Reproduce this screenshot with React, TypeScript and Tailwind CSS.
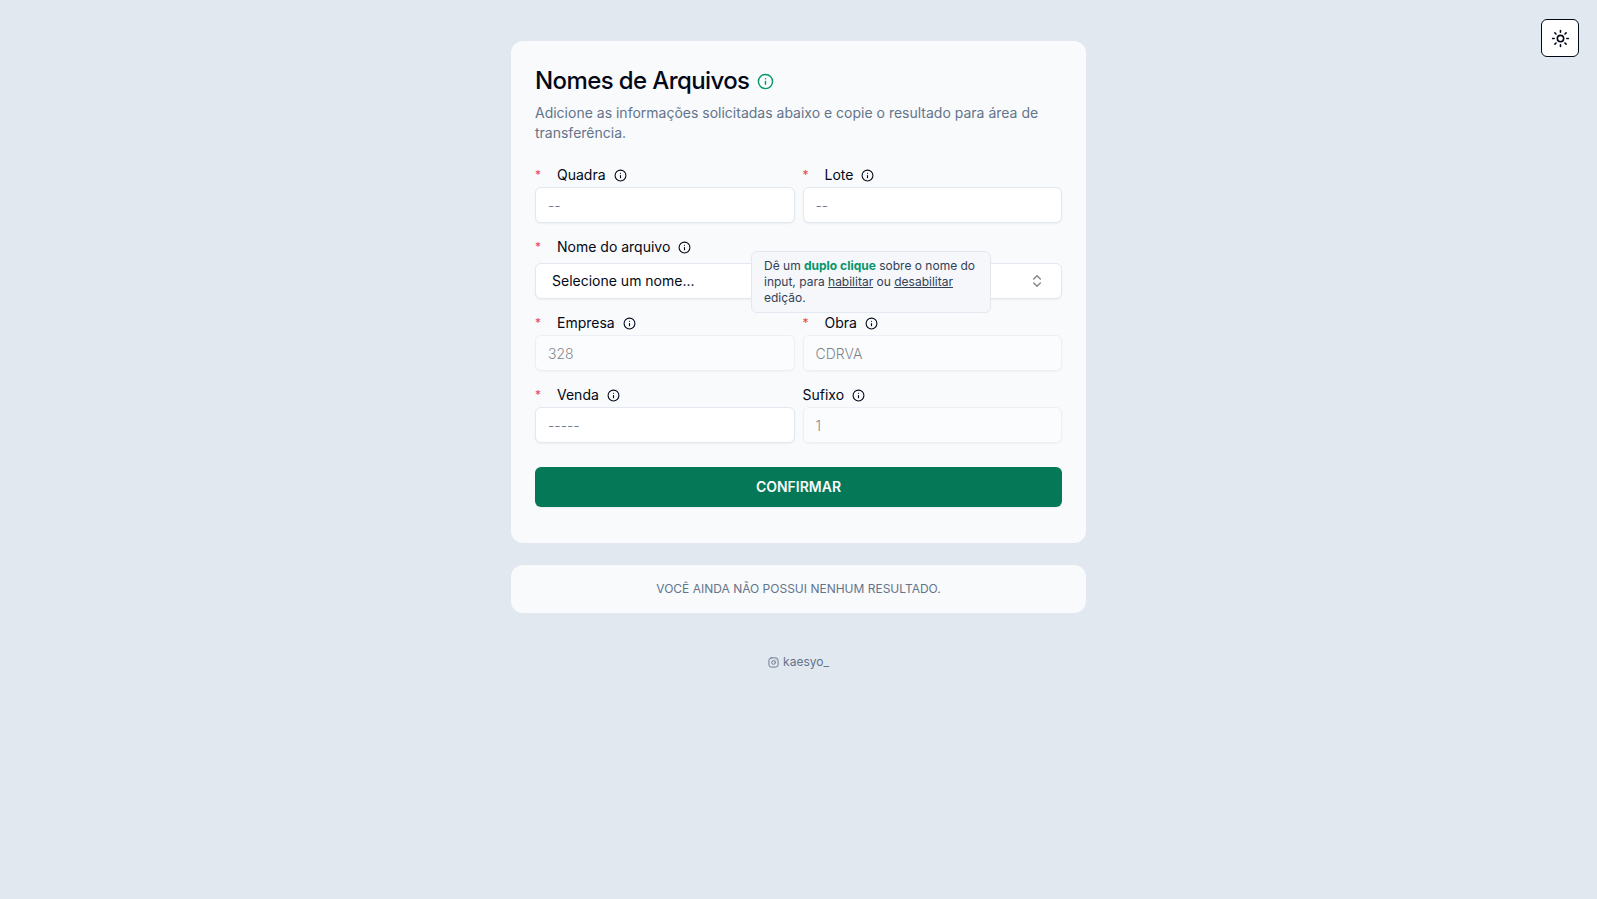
import { useState } from 'react';
import type { ReactNode } from 'react';
import { ChevronsUpDown, Info, Instagram, Sun } from 'lucide-react';

type FieldProps = {
  id: string;
  label: string;
  required?: boolean;
  children: ReactNode;
};

function Field({ id, label, required = false, children }: FieldProps) {
  return (
    <div className="flex flex-col gap-0.5">
      <div className="flex h-5 items-center text-sm">
        {required && <span className="w-[22px] text-xs leading-5 text-[#ef4444]">*</span>}
        <label htmlFor={id}>{label}</label>
        <Info className="ml-2 size-[13px]" aria-hidden="true" />
      </div>
      {children}
    </div>
  );
}

const inputClass =
  'h-9 w-full rounded-md border border-[#e2e8f0] bg-white px-3 text-sm font-light shadow-xs outline-none placeholder:text-[#64748b] focus-visible:border-slate-400 disabled:opacity-50';

export default function App() {
  const [values, setValues] = useState({ quadra: '', lote: '', venda: '' });
  const update = (key: keyof typeof values) => (e: { target: { value: string } }) =>
    setValues({ ...values, [key]: e.target.value });

  return (
    <div className="min-h-screen bg-[#e2e8f0] font-[Inter,sans-serif] text-[#020817] antialiased">
      <button
        type="button"
        aria-label="Alternar tema"
        className="absolute top-[19px] right-[18px] flex size-[38px] items-center justify-center rounded-md border border-[#020817] bg-white"
      >
        <Sun className="size-[19px]" />
      </button>

      <main className="mx-auto flex w-full max-w-[575px] flex-col pt-[41px]">
        <section className="rounded-xl bg-[#f8fafc] px-6 pt-6 pb-9">
          <header>
            <div className="flex items-center gap-2">
              <h1 className="text-2xl font-medium tracking-tight">Nomes de Arquivos</h1>
              <Info className="size-[17px] text-[#059669]" aria-hidden="true" />
            </div>
            <p className="mt-1.5 text-sm text-[#64748b]">
              Adicione as informações solicitadas abaixo e copie o resultado para área de transferência.
            </p>
          </header>

          <form className="mt-[22px] flex flex-col" onSubmit={(e) => e.preventDefault()}>
            <div className="flex flex-col gap-3.5">
              <div className="grid grid-cols-2 gap-2">
                <Field id="quadra" label="Quadra" required>
                  <input id="quadra" placeholder="--" className={inputClass} value={values.quadra} onChange={update('quadra')} />
                </Field>
                <Field id="lote" label="Lote" required>
                  <input id="lote" placeholder="--" className={inputClass} value={values.lote} onChange={update('lote')} />
                </Field>
              </div>

              <div className="relative">
                <Field id="nome" label="Nome do arquivo" required>
                  <button
                    id="nome"
                    type="button"
                    role="combobox"
                    aria-expanded="false"
                    aria-controls="nome-lista"
                    className="mt-1 flex h-9 w-full items-center justify-between rounded-md border border-[#e2e8f0] bg-white px-4 text-sm shadow-xs"
                  >
                    Selecione um nome...
                    <ChevronsUpDown className="size-4 opacity-50" />
                  </button>
                </Field>
                <div
                  role="tooltip"
                  className="absolute top-3.5 left-[216px] w-60 rounded-md border border-[#e2e8f0] bg-[#f5f7fb] px-3 py-1.5 text-xs text-[#334155]"
                >
                  Dê um <strong className="font-bold text-[#059669]">duplo clique</strong> sobre o nome do input, para{' '}
                  <span className="underline">habilitar</span> ou <span className="underline">desabilitar</span> edição.
                </div>
              </div>

              <div className="grid grid-cols-2 gap-2">
                <Field id="empresa" label="Empresa" required>
                  <input id="empresa" defaultValue="328" disabled className={inputClass} />
                </Field>
                <Field id="obra" label="Obra" required>
                  <input id="obra" defaultValue="CDRVA" disabled className={inputClass} />
                </Field>
              </div>

              <div className="grid grid-cols-2 gap-2">
                <Field id="venda" label="Venda" required>
                  <input id="venda" placeholder="-----" className={inputClass} value={values.venda} onChange={update('venda')} />
                </Field>
                <Field id="sufixo" label="Sufixo">
                  <input id="sufixo" defaultValue="1" disabled className={inputClass} />
                </Field>
              </div>
            </div>

            <button
              type="submit"
              className="mt-6 h-10 rounded-md bg-[#047857] text-sm font-semibold text-[#f8fafc] uppercase shadow-xs"
            >
              Confirmar
            </button>
          </form>
        </section>

        <section className="mt-[22px] rounded-xl bg-[#f8fafc] p-4 text-center text-xs text-[#64748b] uppercase">
          Você ainda não possui nenhum resultado.
        </section>

        <footer className="mt-[41px] flex justify-center text-xs text-[#64748b]">
          <a href="#kaesyo_" className="flex items-center gap-1">
            <Instagram className="size-[11px]" aria-hidden="true" />
            kaesyo_
          </a>
        </footer>
      </main>
    </div>
  );
}
